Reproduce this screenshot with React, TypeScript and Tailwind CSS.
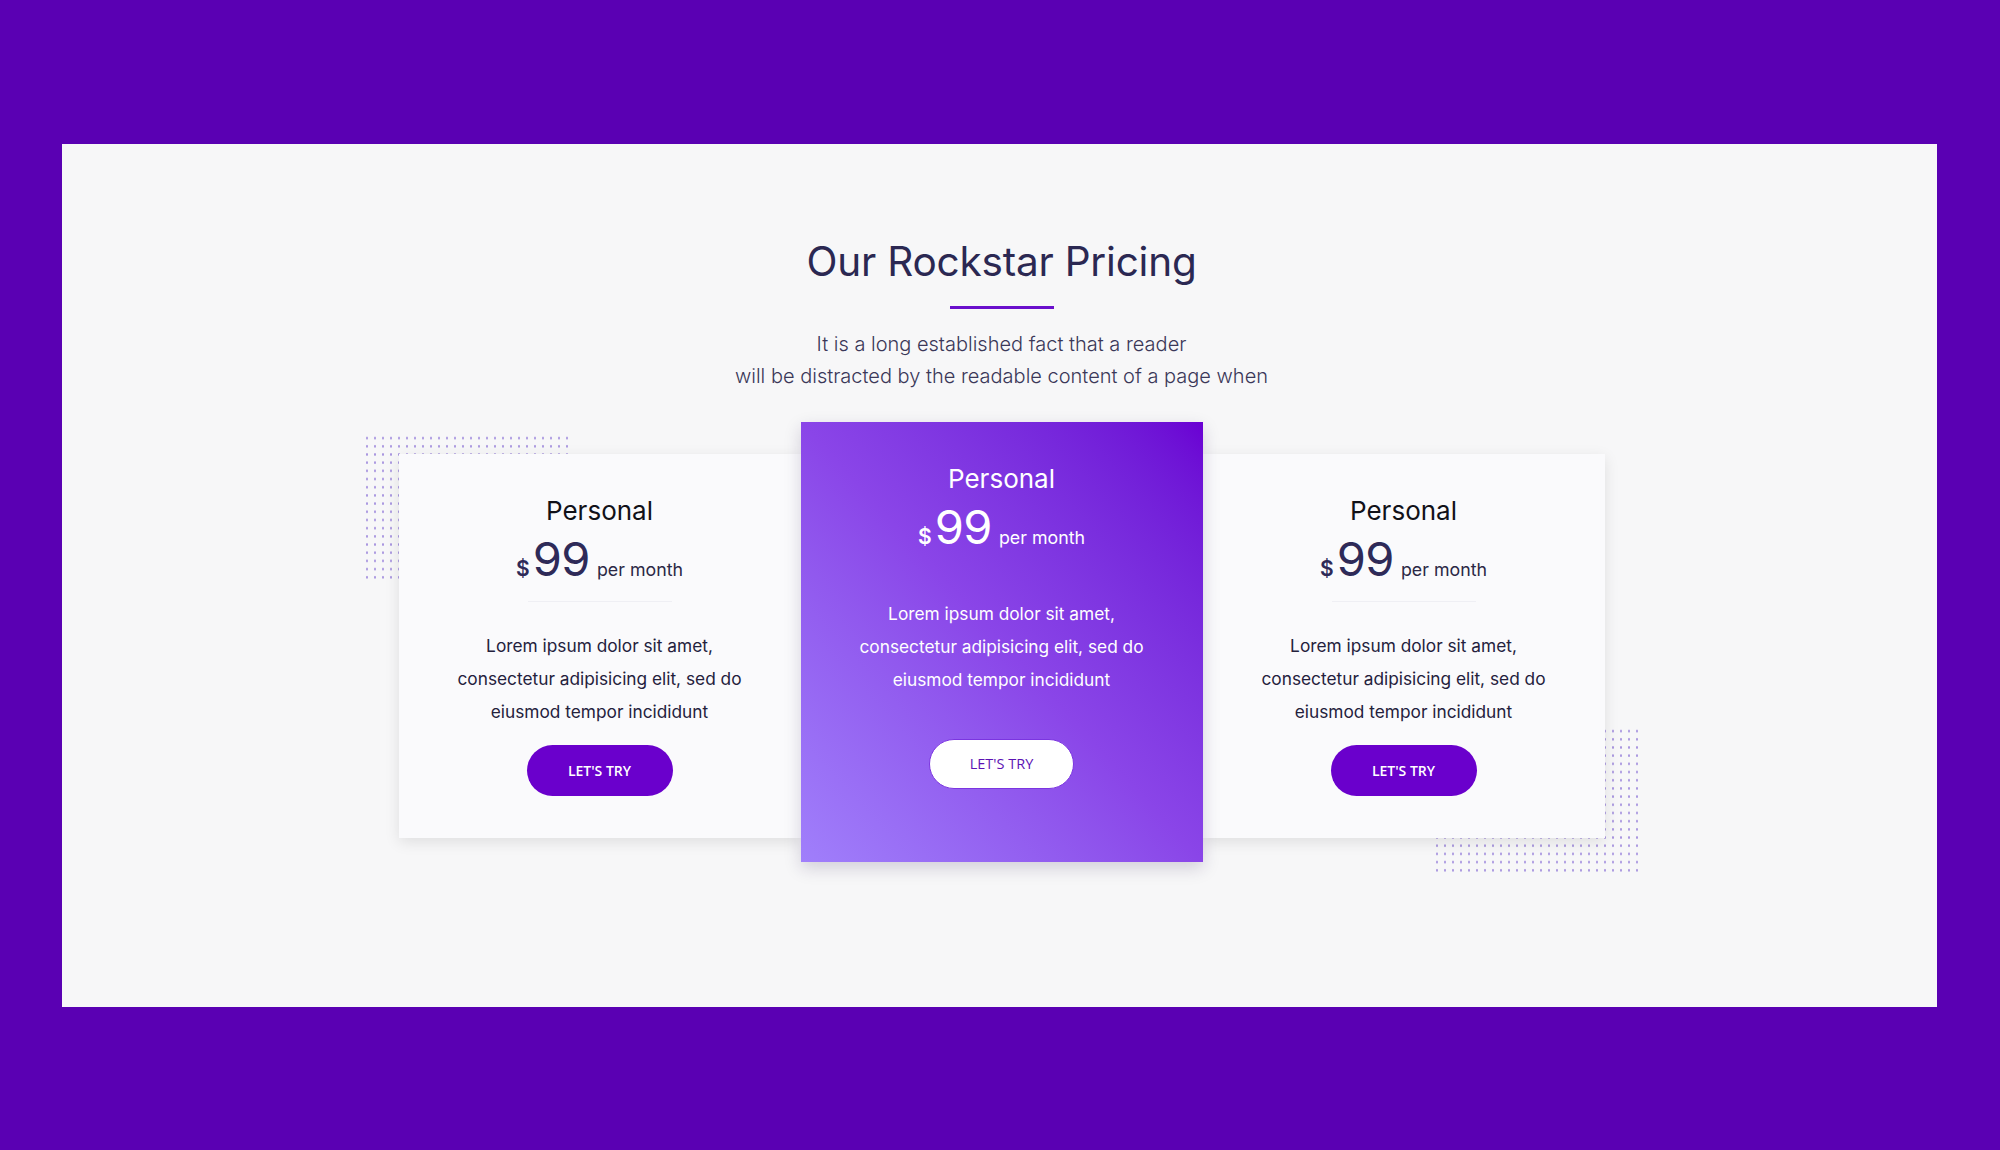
const body = [
  "Lorem ipsum dolor sit amet,",
  "consectetur adipisicing elit, sed do",
  "eiusmod tempor incididunt",
];

const Dots = ({ className }: { className: string }) => (
  <div
    className={
      "absolute w-[207px] h-[149px] bg-[radial-gradient(circle,#a996e0_0.9px,transparent_1.4px)] bg-[length:8px_8.2px] " +
      className
    }
  />
);

const PriceCard = ({ featured = false }: { featured?: boolean }) => {
  return (
    <div
      className={
        featured
          ? "relative z-10 w-[402px] h-[440px] flex flex-col items-center pt-[42px] bg-gradient-to-bl from-[#6a00d3] via-[#8a45e8] to-[#a07ffb] shadow-[0_6px_16px_rgba(40,20,80,0.18)]"
          : "relative w-[402px] h-[384px] mt-8 flex flex-col items-center pt-[42px] bg-[#fafafc] shadow-[0_4px_14px_rgba(0,0,0,0.10)]"
      }
    >
      <h3
        className={
          "text-[26px] leading-[30px] font-normal " +
          (featured ? "text-white" : "text-[#111118]")
        }
      >
        Personal
      </h3>
      <div
        className={
          "mt-[9px] flex items-baseline leading-none " +
          (featured ? "text-white" : "text-[#2e2a58]")
        }
      >
        <span className="text-[21px] font-semibold mr-[3px]">$</span>
        <span className="text-[47px] font-normal tracking-[-0.5px]">99</span>
        <span
          className={
            "ml-[7px] text-[17.8px] " + (featured ? "text-white" : "text-[#2b2845]")
          }
        >
          per month
        </span>
      </div>
      <div
        className={
          "mt-[19px] w-[144px] h-px " + (featured ? "bg-transparent" : "bg-[#efeff4]")
        }
      />
      <div
        className={
          "mt-[27px] text-center text-[17.3px] leading-[33px] font-normal " +
          (featured ? "text-white" : "text-[#24213c]")
        }
      >
        {body.map((line) => (
          <p key={line}>{line}</p>
        ))}
      </div>
      {featured ? (
        <button className="mt-[43px] w-[145px] h-[50px] rounded-full bg-white border border-[#7b35e0] text-[#5c12b4] text-[14.5px] font-['Open_Sans',sans-serif]">
          LET'S TRY
        </button>
      ) : (
        <button className="mt-[17px] w-[146px] h-[51px] rounded-full bg-[#6a00cc] text-white text-[14px] font-semibold font-['Open_Sans',sans-serif]">
          LET'S TRY
        </button>
      )}
    </div>
  );
};

export default function App() {
  return (
    <div className="min-h-[1150px] w-full bg-[#5a00b3] pt-[144px] pl-[62px] font-['Inter','Noto_Sans',sans-serif]">
      <section className="w-[1875px] h-[863px] bg-[#f7f7f8] pl-[4px] pt-[94px] flex flex-col items-center">
        <h2 className="text-[40.5px] leading-[48px] font-normal text-[#2b2852] tracking-[-0.2px]">
          Our Rockstar Pricing
        </h2>
        <div className="mt-[20px] w-[104px] h-[3px] bg-[#6a0fcc]" />
        <p className="mt-[20px] text-center text-[20px] leading-[31.5px] font-light text-[#3b3858]">
          It is a long established fact that a reader
          <br />
          will be distracted by the readable content of a page when
        </p>

        <div className="mt-[30px] flex items-start">
          <div className="relative">
            <Dots className="-left-[36px] top-[12px]" />
            <PriceCard />
          </div>
          <PriceCard featured />
          <div className="relative">
            <Dots className="left-[230px] top-[305px]" />
            <PriceCard />
          </div>
        </div>
      </section>
    </div>
  );
}
